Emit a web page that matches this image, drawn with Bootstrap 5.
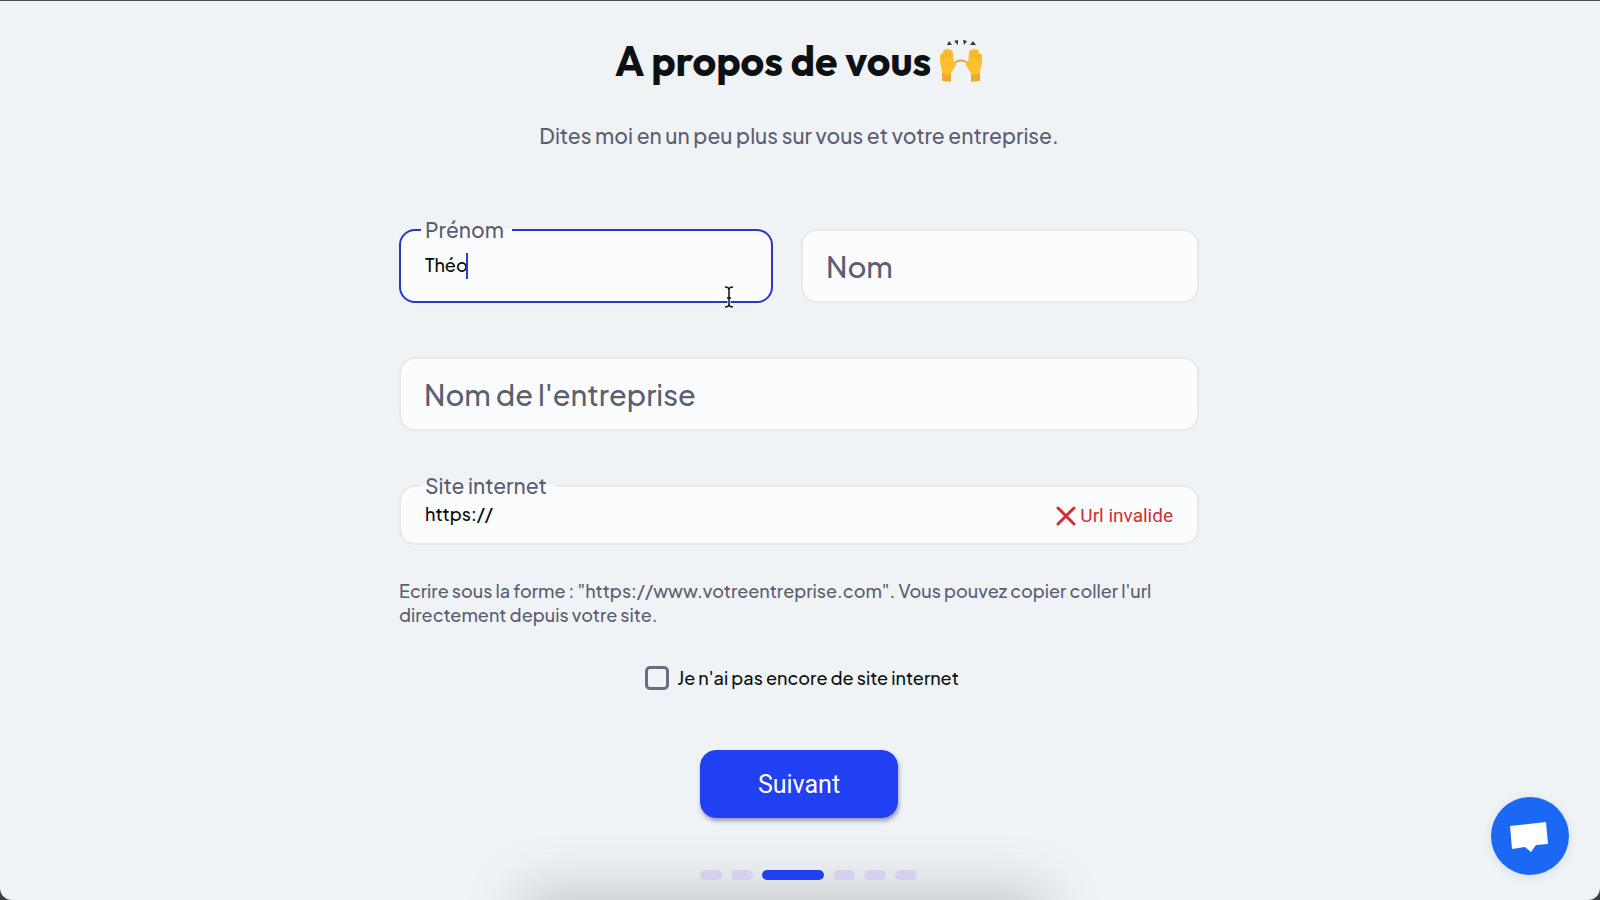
<!DOCTYPE html>
<html lang="fr">
<head>
<meta charset="utf-8">
<meta name="viewport" content="width=device-width, initial-scale=1">
<title>A propos de vous</title>
<link href="https://cdn.jsdelivr.net/npm/bootstrap@5.3.0/dist/css/bootstrap.min.css" rel="stylesheet">
<style>
  :root { --ink: #0d1114; --muted: #5c5e72; --brand: #2140f2; --page: #eff3f6; --field: #fafcfd; --line: #e6e9ec; }
  body { background: #3c3f42; color: var(--ink); font-family: "Plus Jakarta Sans", Inter, "Liberation Sans", sans-serif; font-weight: 500; }
  .screen { background: var(--page); border-top: 1px solid #4a4c50; border-radius: 0 0 12px 12px; padding-right: 2px; }
  .onboarding { width: 100%; max-width: 800px; padding-top: 34px; }
  h1 { font-family: Outfit, Lato, sans-serif; font-weight: 700; font-size: 41px; line-height: 52px; }
  .hands { width: 44px; height: 44px; }
  .intro { font-size: 21px; line-height: 28px; margin: 35px 0 79px; color: var(--muted); }
  .name-grid { display: grid; grid-template-columns: 374fr 398fr; gap: 28px; }
  .field-stack { display: grid; gap: 54px; }
  .field { position: relative; }
  .field .form-control { height: 74px; padding: 0 24px; border: 2px solid var(--line); border-radius: 16px; background: var(--field); color: #0a0a0a; font-size: 18px; font-weight: 500; box-shadow: none; }
  .field .is-current { border-color: #2a35cc; padding-bottom: 4px; }
  .field .short { height: 60px; padding-bottom: 4px; }
  .float-label { position: absolute; left: 22px; top: -11px; padding: 0 8px 0 4px; line-height: 24px; font-size: 21px; color: var(--muted); background: linear-gradient(var(--page) 11px, var(--field) 11px); }
  .rest-label { position: absolute; left: 25px; top: 18px; line-height: 38px; font-size: 29px; color: var(--muted); }
  .caret { position: absolute; left: 67px; top: 24px; width: 2px; height: 26px; background: #2140d0; }
  .pointer { position: absolute; right: 38px; top: 57px; width: 12px; height: 22px; }
  .problem { position: absolute; right: 26px; top: 19px; line-height: 24px; font-family: Roboto, sans-serif; font-size: 19px; font-weight: 400; color: #cc3034; }
  .hint { font-size: 18px; line-height: 24px; margin: 34px 0 38px; color: var(--muted); }
  .optout { font-size: 18px; line-height: 26px; padding-left: 6px; }
  .optout .form-check-input { width: 24px; height: 24px; margin: 0; border: 3px solid #6b6c7f; border-radius: 5px; background-color: var(--page); }
  .actions { width: 198px; margin-top: 59px; }
  .next { --bs-btn-bg: var(--brand); --bs-btn-border-color: var(--brand); height: 68px; padding-top: 8px; border-radius: 16px; font-family: Roboto, sans-serif; font-size: 25px; font-weight: 400; box-shadow: 1px 3px 4px #9a9ab8; }
  .steps { margin: 52px 0 20px; gap: 9px; }
  .steps li { flex: none; width: 22px; height: 10px; border-radius: 5px; background: #d3d1ee; }
  .steps .current { width: 62px; background: var(--brand); }
  .dock-shade { position: absolute; left: 33%; right: 35%; bottom: -30px; height: 30px; box-shadow: 0 0 50px 10px #85858866; border-radius: 20px; }
  .chat { position: absolute; right: 31px; bottom: 25px; width: 78px; height: 78px; background: #1b68f5; box-shadow: 0 2px 10px #d5dce4; }
</style>
</head>
<body>
<main class="screen position-relative overflow-hidden min-vh-100 d-flex flex-column align-items-center">
  <div class="dock-shade"></div>
  <form class="onboarding position-relative d-flex flex-column align-items-center">
    <h1 class="m-0 d-flex align-items-center gap-2">A propos de vous
      <svg class="hands" viewBox="0 0 44 44" aria-hidden="true">
        <g fill="#34383c"><path d="M8 6l2-4 3 4zM15 2l4-1v5zM24 1l4 1-3 4zM31 6l3-4 3 4z"/></g>
        <path d="M12 27q10-11 20 0" fill="none" stroke="#e8a33a" stroke-width="2"/>
        <path fill="#fcc12d" d="M3 42V32L1 24V16q1-3 3-1V12q2-3 3-1 2-3 4 0 3-1 3 3l1 10q4 0 1 4l-4 6v9z"/>
        <path fill="#fcc12d" d="M41 42V32l2-8V16q-1-3-3-1V12q-2-3-3-1-2-3-4 0-3-1-3 3l-1 10q-4 0-1 4l4 6v9z"/>
        <path fill="#f0a92a" d="M3 34q4 3 9 1v7H3zM41 34q-4 3-9 1v7h9z"/>
        <path fill="none" stroke="#e9a52b" d="M4 15v6M7 12v8M11 12v8M40 15v6M37 12v8M33 12v8"/>
      </svg>
    </h1>
    <p class="intro text-center">Dites moi en un peu plus sur vous et votre entreprise.</p>

    <div class="field-stack w-100">
      <div class="name-grid">
        <div class="field">
          <input class="form-control is-current" id="firstname" type="text" value="Théo">
          <label class="float-label" for="firstname">Prénom</label>
          <span class="caret"></span>
          <svg class="pointer" viewBox="0 0 12 22" fill="none" aria-hidden="true"><path d="M2 1q4 0 4 3v14q0 3-4 3M10 1q-4 0-4 3v14q0 3 4 3M4 12h4" stroke="#fff" stroke-width="3"/><path d="M2 1q4 0 4 3v14q0 3-4 3M10 1q-4 0-4 3v14q0 3 4 3M4 12h4" stroke="#111" stroke-width="1.5"/></svg>
        </div>
        <div class="field">
          <input class="form-control" id="lastname" type="text">
          <label class="rest-label" for="lastname">Nom</label>
        </div>
      </div>
      <div class="field">
        <input class="form-control" id="company" type="text">
        <label class="rest-label" for="company">Nom de l'entreprise</label>
      </div>
      <div class="field">
        <input class="form-control short" id="website" type="text" value="https://">
        <label class="float-label" for="website">Site internet</label>
        <span class="problem d-flex align-items-center gap-1"><svg width="20" height="20" viewBox="0 0 20 20" aria-hidden="true"><path d="M2 2l16 16M18 2L2 18" stroke="#d32f2f" stroke-width="3" stroke-linecap="round"/></svg>Url invalide</span>
      </div>
    </div>

    <p class="hint w-100">Ecrire sous la forme : "https://www.votreentreprise.com". Vous pouvez copier coller l'url directement depuis votre site.</p>
    <div class="optout d-flex align-items-center gap-2">
      <input class="form-check-input" id="nosite" type="checkbox">
      <label for="nosite">Je n'ai pas encore de site internet</label>
    </div>
    <div class="actions">
      <button class="btn btn-primary next w-100" type="button">Suivant</button>
      <ol class="steps list-unstyled d-flex">
        <li></li><li></li><li class="current"></li><li></li><li></li><li></li>
      </ol>
    </div>
  </form>
  <button class="chat btn rounded-circle p-0 border-0" type="button" aria-label="Chat">
    <svg width="78" height="78" viewBox="0 0 78 78" aria-hidden="true"><path fill="#fff" d="M19 29l36-4 2 22-12 1-5 7-6-5-13 2z"/></svg>
  </button>
</main>
<script src="https://cdn.jsdelivr.net/npm/bootstrap@5.3.0/dist/js/bootstrap.bundle.min.js"></script>
</body>
</html>
